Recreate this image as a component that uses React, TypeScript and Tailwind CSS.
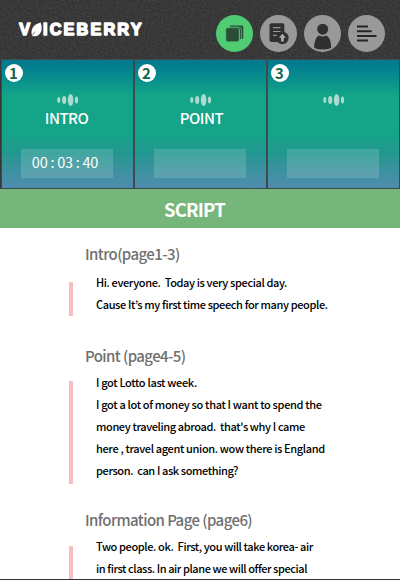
import type { ReactNode } from "react";

const FONT = "font-['Noto_Sans_CJK_KR','Noto_Sans',sans-serif]";

function Grain() {
  return (
    <svg className="absolute inset-0 -z-10 h-full w-full" aria-hidden="true">
      <filter id="grain" x="0" y="0" width="100%" height="100%" colorInterpolationFilters="sRGB">
        <feTurbulence type="fractalNoise" baseFrequency="0.5" numOctaves="3" seed="4" />
        <feColorMatrix values="0.12 0 0 0 0.162  0.12 0 0 0 0.162  0.12 0 0 0 0.162  0 0 0 0 1" />
      </filter>
      <rect width="100%" height="100%" filter="url(#grain)" />
    </svg>
  );
}

function Logo() {
  return (
    <svg width="128" height="20" viewBox="0 0 128 20" className="mt-5 ml-[17px] font-['Liberation_Sans',sans-serif] font-bold" fill="#fff" stroke="#fff" strokeLinejoin="round" strokeLinecap="round">
      <text x="2.3" y="15.2" fontSize="16.3" strokeWidth="1.5">V</text>
      <path d="M15.2 16.2C13 9.5 16 4.4 23.6 2.4C26.2 9 24.2 16 17.4 16.2Z" stroke="none" />
      <path d="M14.9 16L17.8 11.8" stroke="#383838" strokeWidth=".6" />
      <text x="26" y="15.2" fontSize="16.3" strokeWidth="1.5" textLength="98.5" lengthAdjust="spacing">ICEBERRY</text>
    </svg>
  );
}

function Round({ active, children }: { active?: boolean; children: ReactNode }) {
  return (
    <button className={`size-[37px] overflow-hidden rounded-full ${active ? "bg-[#50cc72]" : "bg-[#999]"}`}>
      <svg width="37" height="37" viewBox="0 0 37 37" fill="none">{children}</svg>
    </button>
  );
}

function Wave() {
  return (
    <svg width="22" height="12" viewBox="0 0 22 12" fill="#acdcd0">
      <ellipse cx="1.8" cy="6" rx="1.5" ry="3" />
      <ellipse cx="7.2" cy="6" rx="2.1" ry="4.1" />
      <ellipse cx="13.6" cy="6" rx="2.8" ry="6" />
      <ellipse cx="19.5" cy="6" rx="1.6" ry="3.4" />
    </svg>
  );
}

function Card({ n, label, time, shift = "" }: { n: string; label?: string; time?: string; shift?: string }) {
  return (
    <section className="relative flex h-[128px] w-[131px] flex-col items-center bg-linear-to-b from-[#037a8f] from-2% via-[#14a488] via-28% to-[#14a488] shadow-[0_0_0_1px_#3d4b4c]">
      <div className="absolute inset-x-0 top-[38px] bottom-0 bg-linear-to-b from-[#14a488] from-38% via-[#229790] via-62% to-[#4d8cae]" />
      <span className="absolute top-1 left-[3px] flex size-[18px] items-center justify-center rounded-full bg-white text-[15px] leading-[18px] font-bold text-[#14674b]">{n}</span>
      <div className="relative mt-[34px] ml-px h-3"><Wave /></div>
      <div className={`relative mt-[2px] h-5 text-[15px] leading-5 font-medium tracking-[-0.5px] text-white ${shift}`}>{label}</div>
      <div className="relative mt-[21px] flex h-[29px] w-[92px] items-center justify-center bg-white/15 pr-[4px] pb-[2px] text-[14.5px] leading-none tracking-[-0.25px] whitespace-pre text-white">{time}</div>
    </section>
  );
}

type PassageProps = { title: string; tracking: string; bar: string; top: string; gap: string; lines: [string, string][] };

function Passage({ title, tracking, bar, top, gap, lines }: PassageProps) {
  return (
    <section className={top}>
      <h2 className={`ml-[85px] h-6 text-[15px] leading-6 font-medium whitespace-pre text-[#707070] ${tracking}`}>{title}</h2>
      <div className="flex items-start">
        <div className={`ml-[69px] w-1 shrink-0 bg-[#f7bec1] ${bar}`} />
        <div className={`ml-[23px] ${gap}`}>
          {lines.map(([text, spacing]) => (
            <p key={text} className={`h-[22px] text-[11px] leading-[22px] font-medium whitespace-pre text-black ${spacing}`}>{text}</p>
          ))}
        </div>
      </div>
    </section>
  );
}

export default function App() {
  return (
    <main className={`relative isolate flex h-[580px] w-[400px] flex-col overflow-hidden bg-white ${FONT}`}>
      <div className="relative isolate h-[189px] shrink-0 bg-[#383838]">
        <Grain />
        <header className="flex h-[60px]">
          <Logo />
          <nav className="mt-[15px] ml-[71px] flex gap-[7px]">
            <Round active>
              <path d="M14.5 10.5H26a1.3 1.3 0 0 1 1.3 1.3V22.5a1.5 1.5 0 0 1-1.5 1.5H24V16a3 3 0 0 0-3-3H14.2V11Z" fill="#2c4c38" />
              <path d="M15 12.2H23.4a2 2 0 0 1 2 2V24" stroke="#50cc72" strokeWidth=".7" />
              <rect x="9.8" y="12.7" width="13.4" height="14" rx="2" fill="#2c4c38" stroke="#50cc72" strokeWidth=".6" />
            </Round>
            <Round>
              <path d="M11.5 8.3H22.5a1.8 1.8 0 0 1 1.8 1.8V25a2 2 0 0 1-2 2H11.5a2 2 0 0 1-2-2V10.3a2 2 0 0 1 2-2Z" fill="#303030" />
              <path d="M13 12.7h7.5M13 16.5h7.5M13 20.3h4.5" stroke="#999" strokeWidth="1.2" />
              <circle cx="22.4" cy="23" r="6.2" fill="#303030" />
              <path d="M22.4 18.8l3.5 4h-2.1v3.8h-2.8v-3.8h-2.1Z" fill="#aaa" />
            </Round>
            <Round>
              <circle cx="18.7" cy="14.2" r="5.5" fill="#303030" />
              <path d="M10.2 33C10 26.5 12.5 21.3 15 20.5Q18.7 22.5 22.4 20.5C25.5 22 27.2 27 27.2 33Q18.7 36 10.2 33Z" fill="#303030" />
            </Round>
            <Round>
              <path d="M9 11.6H20M9 16.3H23.8M9 21H28.5M9 25.6H20" stroke="#252525" strokeWidth="2" />
            </Round>
          </nav>
        </header>
        <div className="flex gap-[2px] pl-[1.5px]">
          <Card n="1" label="INTRO" time="00 : 03 : 40" shift="pr-px" />
          <Card n="2" label="POINT" shift="pl-[3px]" />
          <Card n="3" />
        </div>
      </div>
      <h1 className="flex h-[39px] shrink-0 items-center justify-center bg-[#76b67b] pr-[11px] pt-px text-[18.5px] leading-none font-bold tracking-[-0.85px] text-white">SCRIPT</h1>
      <Passage top="mt-[14px]" gap="mt-[5px]" title="Intro(page1-3)" tracking="tracking-[-0.6px]" bar="mt-4 h-[34px]" lines={[
        ["Hi. everyone.  Today is very special day.", "tracking-[-0.37px]"],
        ["Cause It’s my first time speech for many people.", "tracking-[-0.38px]"],
      ]} />
      <Passage top="mt-[28px]" gap="mt-[3px]" title="Point (page4-5)" tracking="tracking-[-0.6px]" bar="mt-[13px] h-[103px]" lines={[
        ["I got Lotto last week.", "tracking-[-0.33px]"],
        ["I got a lot of money so that I want to spend the", "tracking-[-0.33px]"],
        ["money traveling abroad.  that's why I came", "tracking-[-0.38px]"],
        ["here , travel agent union. wow there is England", "tracking-[-0.35px]"],
        ["person.  can I ask something?", "tracking-[-0.39px]"],
      ]} />
      <Passage top="mt-[24px]" gap="mt-[3px]" title="Information Page (page6)" tracking="tracking-[-0.58px]" bar="mt-[14px] h-[34px]" lines={[
        ["Two people. ok.  First, you will take korea- air", "tracking-[-0.39px]"],
        ["in first class. In air plane we will offer special", "tracking-[-0.42px]"],
      ]} />
      <div className="absolute inset-x-0 bottom-0 h-px bg-[#333]" />
    </main>
  );
}
